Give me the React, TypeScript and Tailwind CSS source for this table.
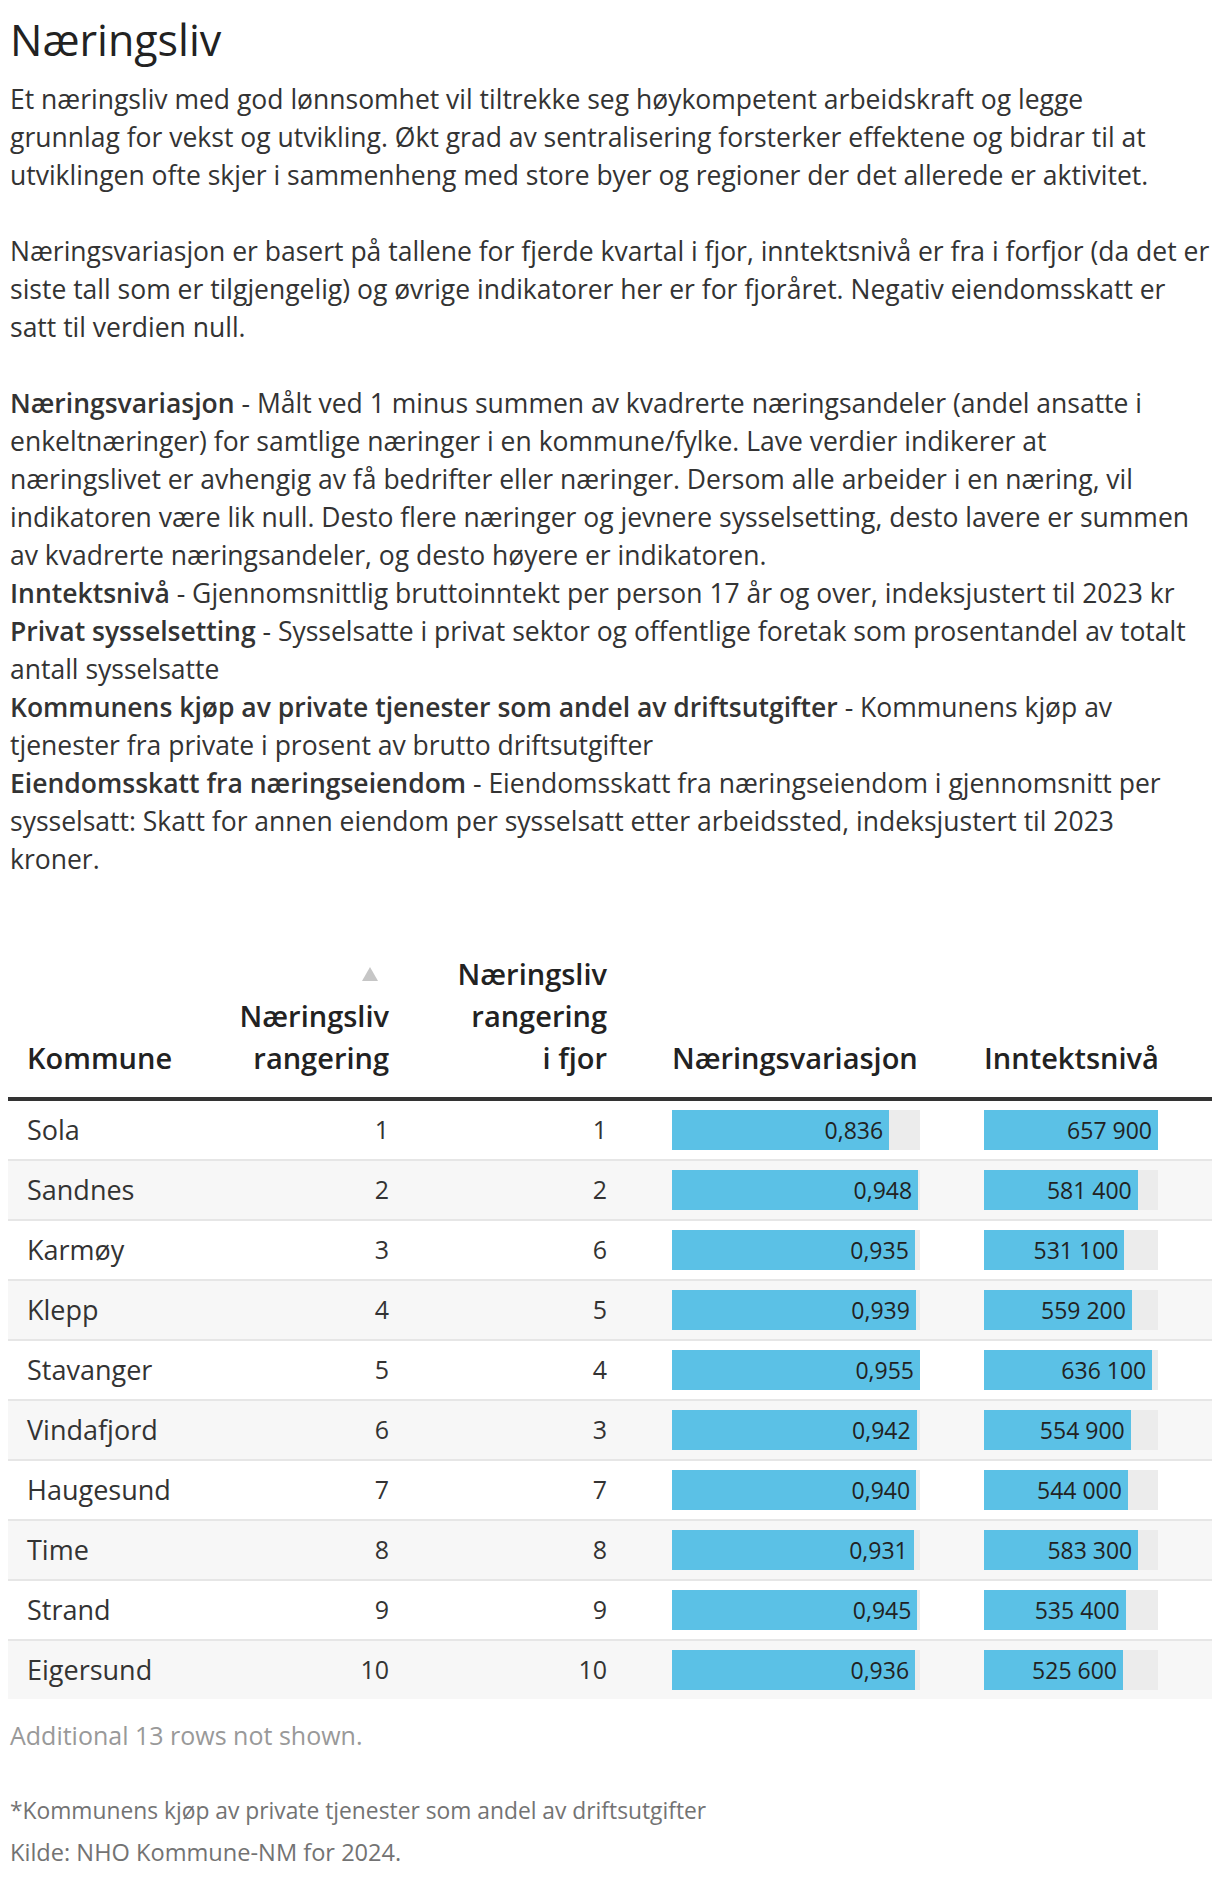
import React from "react";

type Row = {
  kommune: string;
  rank: number;
  rankLastYear: number;
  variasjon: number;
  inntekt: number;
};

const rows: Row[] = [
  { kommune: "Sola", rank: 1, rankLastYear: 1, variasjon: 0.836, inntekt: 657900 },
  { kommune: "Sandnes", rank: 2, rankLastYear: 2, variasjon: 0.948, inntekt: 581400 },
  { kommune: "Karmøy", rank: 3, rankLastYear: 6, variasjon: 0.935, inntekt: 531100 },
  { kommune: "Klepp", rank: 4, rankLastYear: 5, variasjon: 0.939, inntekt: 559200 },
  { kommune: "Stavanger", rank: 5, rankLastYear: 4, variasjon: 0.955, inntekt: 636100 },
  { kommune: "Vindafjord", rank: 6, rankLastYear: 3, variasjon: 0.942, inntekt: 554900 },
  { kommune: "Haugesund", rank: 7, rankLastYear: 7, variasjon: 0.94, inntekt: 544000 },
  { kommune: "Time", rank: 8, rankLastYear: 8, variasjon: 0.931, inntekt: 583300 },
  { kommune: "Strand", rank: 9, rankLastYear: 9, variasjon: 0.945, inntekt: 535400 },
  { kommune: "Eigersund", rank: 10, rankLastYear: 10, variasjon: 0.936, inntekt: 525600 },
];

const maxVariasjon = Math.max(...rows.map((r) => r.variasjon));
const maxInntekt = Math.max(...rows.map((r) => r.inntekt));

const fmtDecimal = (v: number) => v.toFixed(3).replace(".", ",");
const fmtKr = (v: number) => v.toString().replace(/\B(?=(\d{3})+(?!\d))/g, "\u00a0");

const Bar = ({ pct, label, width }: { pct: number; label: string; width: string }) => (
  <div className={`${width} h-[40px] bg-[#ececec] flex`}>
    <div
      className="h-full bg-[#5bc1e6] flex items-center justify-end pr-[6px] whitespace-nowrap text-[23px] text-[#222]"
      style={{ width: `${pct * 100}%` }}
    >
      {label}
    </div>
  </div>
);

const SortArrow = () => (
  <svg width="16" height="14" viewBox="0 0 16 14" className="mr-[11px]">
    <polygon points="8,0 16,14 0,14" fill="#c6c6c6" />
  </svg>
);

const cols = "grid grid-cols-[202px_195px_218px_345px_242px]";

export default function App() {
  return (
    <div className="bg-white text-[#333] font-['Open_Sans','Lato',sans-serif] px-[8px] pt-[16px] pb-[10px] w-[1220px]">
      <h1 className="text-[43px] leading-[48px] text-[#222] mb-[16px] pl-[2px]">Næringsliv</h1>

      <div className="text-[26.5px] leading-[38px] pl-[2px] whitespace-nowrap">
        <p className="mb-[38px]">
          Et næringsliv med god lønnsomhet vil tiltrekke seg høykompetent arbeidskraft og legge
          <br />
          grunnlag for vekst og utvikling. Økt grad av sentralisering forsterker effektene og bidrar til at
          <br />
          utviklingen ofte skjer i sammenheng med store byer og regioner der det allerede er aktivitet.
        </p>
        <p className="mb-[38px]">
          Næringsvariasjon er basert på tallene for fjerde kvartal i fjor, inntektsnivå er fra i forfjor (da det er
          <br />
          siste tall som er tilgjengelig) og øvrige indikatorer her er for fjoråret. Negativ eiendomsskatt er
          <br />
          satt til verdien null.
        </p>
        <p>
          <b className="font-semibold">Næringsvariasjon</b> - Målt ved 1 minus summen av kvadrerte næringsandeler
          (andel ansatte i
          <br />
          enkeltnæringer) for samtlige næringer i en kommune/fylke. Lave verdier indikerer at
          <br />
          næringslivet er avhengig av få bedrifter eller næringer. Dersom alle arbeider i en næring, vil
          <br />
          indikatoren være lik null. Desto flere næringer og jevnere sysselsetting, desto lavere er summen
          <br />
          av kvadrerte næringsandeler, og desto høyere er indikatoren.
          <br />
          <b className="font-semibold">Inntektsnivå</b> - Gjennomsnittlig bruttoinntekt per person 17 år og over,
          indeksjustert til 2023 kr
          <br />
          <b className="font-semibold">Privat sysselsetting</b> - Sysselsatte i privat sektor og offentlige foretak
          som prosentandel av totalt
          <br />
          antall sysselsatte
          <br />
          <b className="font-semibold">Kommunens kjøp av private tjenester som andel av driftsutgifter</b> -
          Kommunens kjøp av
          <br />
          tjenester fra private i prosent av brutto driftsutgifter
          <br />
          <b className="font-semibold">Eiendomsskatt fra næringseiendom</b> - Eiendomsskatt fra næringseiendom i
          gjennomsnitt per
          <br />
          sysselsatt: Skatt for annen eiendom per sysselsatt etter arbeidssted, indeksjustert til 2023
          <br />
          kroner.
        </p>
      </div>

      <div className="mt-[75px] text-[27px]">
        <div
          className={`${cols} border-b-4 border-[#333] font-semibold text-[29px] text-[#222] leading-[42px] items-end pb-[18px]`}
        >
          <div className="pl-[19px]">Kommune</div>
          <div className="pr-[16px] text-right flex flex-col items-end">
            <div className="h-[42px] flex items-center">
              <SortArrow />
            </div>
            <div>Næringsliv</div>
            <div>rangering</div>
          </div>
          <div className="pr-[16px] text-right">
            Næringsliv
            <br />
            rangering
            <br />i fjor
          </div>
          <div className="pl-[49px]">Næringsvariasjon</div>
          <div className="pl-[16px]">Inntektsnivå</div>
        </div>

        {rows.map((r, i) => (
          <div
            key={r.kommune}
            className={`${cols} items-center ${i % 2 === 1 ? "bg-[#f7f7f7]" : "bg-white"} ${
              i < rows.length - 1 ? "h-[60px] border-b-2 border-[#e6e6e6]" : "h-[58px]"
            }`}
          >
            <div className="pl-[19px]">{r.kommune}</div>
            <div className="pr-[16px] text-right text-[25px]">{r.rank}</div>
            <div className="pr-[16px] text-right text-[25px]">{r.rankLastYear}</div>
            <div className="pl-[49px]">
              <Bar pct={r.variasjon / maxVariasjon} label={fmtDecimal(r.variasjon)} width="w-[248px]" />
            </div>
            <div className="pl-[16px]">
              <Bar pct={r.inntekt / maxInntekt} label={fmtKr(r.inntekt)} width="w-[174px]" />
            </div>
          </div>
        ))}
      </div>

      <p className="mt-[21px] text-[25px] leading-[30px] text-[#999] pl-[2px]">Additional 13 rows not shown.</p>

      <p className="mt-[46px] text-[22.8px] leading-[30px] text-[#737373] pl-[2px]">
        *Kommunens kjøp av private tjenester som andel av driftsutgifter
      </p>
      <p className="mt-[11px] text-[23.6px] leading-[30px] text-[#737373] pl-[2px]">
        Kilde: NHO Kommune-NM for 2024.
      </p>
    </div>
  );
}
